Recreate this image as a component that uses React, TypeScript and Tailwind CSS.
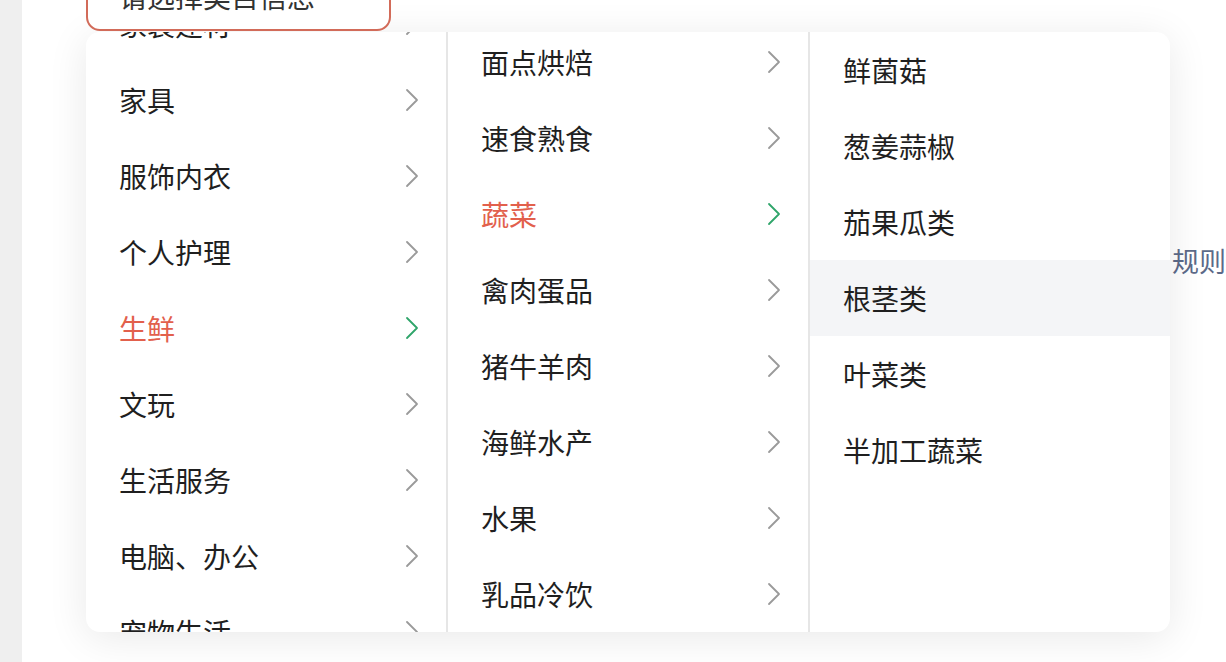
import React from "react";

type Item = { label: string; arrow?: boolean; active?: boolean; hover?: boolean };

const col1: Item[] = [
  { label: "家装建材", arrow: true },
  { label: "家具", arrow: true },
  { label: "服饰内衣", arrow: true },
  { label: "个人护理", arrow: true },
  { label: "生鲜", arrow: true, active: true },
  { label: "文玩", arrow: true },
  { label: "生活服务", arrow: true },
  { label: "电脑、办公", arrow: true },
  { label: "宠物生活", arrow: true },
];

const col2: Item[] = [
  { label: "面点烘焙", arrow: true },
  { label: "速食熟食", arrow: true },
  { label: "蔬菜", arrow: true, active: true },
  { label: "禽肉蛋品", arrow: true },
  { label: "猪牛羊肉", arrow: true },
  { label: "海鲜水产", arrow: true },
  { label: "水果", arrow: true },
  { label: "乳品冷饮", arrow: true },
];

const col3: Item[] = [
  { label: "鲜菌菇" },
  { label: "葱姜蒜椒" },
  { label: "茄果瓜类" },
  { label: "根茎类", hover: true },
  { label: "叶菜类" },
  { label: "半加工蔬菜" },
];

function Chevron({ active }: { active?: boolean }) {
  return (
    <svg width="14" height="24" viewBox="0 0 14 24" fill="none" className="shrink-0">
      <path
        d="M2 2 L12 12 L2 22"
        stroke={active ? "#2fa56a" : "#9a9a9a"}
        strokeWidth="1.8"
        strokeLinecap="round"
        strokeLinejoin="round"
      />
    </svg>
  );
}

function Row({ item }: { item: Item }) {
  return (
    <div
      className={
        "h-[76px] shrink-0 flex items-center justify-between pl-[33px] pr-[27px] " +
        (item.hover ? "bg-[#f4f5f7]" : "")
      }
    >
      <span className={item.active ? "text-[#e2604c]" : "text-[#1f1f1f]"}>{item.label}</span>
      {item.arrow && <Chevron active={item.active} />}
    </div>
  );
}

export default function App() {
  return (
    <div
      className="relative w-full h-[662px] overflow-hidden flex bg-white text-[28px] leading-none"
      style={{ fontFamily: '"Noto Sans CJK SC", "Noto Sans", sans-serif' }}
    >
      <div className="w-[22px] shrink-0 bg-[#efefef]" />
      <div className="flex-1 flex flex-col bg-white">
        <div className="relative z-20 ml-[64px] mt-[-29px] w-[305px] h-[60px] border-2 border-[#d26b59] rounded-[14px] bg-white flex items-center pl-[31px] pb-[10px] text-[#333]">
          请选择类目信息
        </div>
        <div className="ml-[1150px] mt-[216px] whitespace-nowrap text-[27px] text-[#5c6a89]">规则</div>
      </div>

      <div className="absolute z-10 left-[86px] top-[32px] w-[1084px] h-[600px] rounded-[14px] bg-white shadow-[0_6px_40px_rgba(0,0,0,0.09)] overflow-hidden flex">
        <div className="w-[362px] shrink-0 border-r-2 border-[#e6e6e6] overflow-hidden">
          <div className="mt-[-46px] flex flex-col">
            {col1.map((it) => (
              <Row key={it.label} item={it} />
            ))}
          </div>
        </div>
        <div className="w-[362px] shrink-0 border-r-2 border-[#e6e6e6] overflow-hidden">
          <div className="mt-[-8px] flex flex-col">
            {col2.map((it) => (
              <Row key={it.label} item={it} />
            ))}
          </div>
        </div>
        <div className="flex-1 overflow-hidden">
          <div className="flex flex-col">
            {col3.map((it) => (
              <Row key={it.label} item={it} />
            ))}
          </div>
        </div>
      </div>
    </div>
  );
}
